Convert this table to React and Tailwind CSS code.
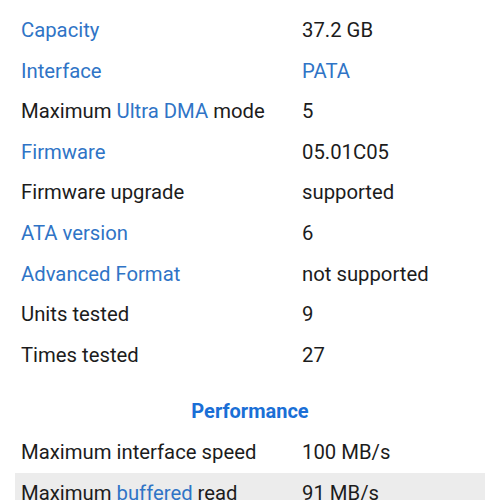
const rows = [
  { label: [{ t: 'Capacity', link: true }], value: '37.2 GB' },
  { label: [{ t: 'Interface', link: true }], value: 'PATA', valueLink: true },
  { label: [{ t: 'Maximum ' }, { t: 'Ultra DMA', link: true }, { t: ' mode' }], value: '5' },
  { label: [{ t: 'Firmware', link: true }], value: '05.01C05' },
  { label: [{ t: 'Firmware upgrade' }], value: 'supported' },
  { label: [{ t: 'ATA version', link: true }], value: '6' },
  { label: [{ t: 'Advanced Format', link: true }], value: 'not supported' },
  { label: [{ t: 'Units tested' }], value: '9' },
  { label: [{ t: 'Times tested' }], value: '27' },
]

const perf = [
  { label: [{ t: 'Maximum interface speed' }], value: '100 MB/s' },
  { label: [{ t: 'Maximum ' }, { t: 'buffered', link: true }, { t: ' read' }], value: '91 MB/s', shaded: true },
]

function Row({ row }) {
  return (
    <div className={`flex items-center h-[40.6px] px-[6px] ${row.shaded ? 'bg-[#ececec]' : ''}`}>
      <div className="w-[281px] whitespace-nowrap">
        {row.label.map((p, i) => (
          <span key={i} className={p.link ? 'text-[#2f74c6]' : ''}>{p.t}</span>
        ))}
      </div>
      <div className={row.valueLink ? 'text-[#2f74c6]' : ''}>{row.value}</div>
    </div>
  )
}

export default function App() {
  return (
    <div className="w-[500px] h-[500px] overflow-hidden bg-white text-[#1c1c1c] text-[20.3px] font-['Roboto',sans-serif]">
      <div className="pt-[10px] px-[15px]">
        {rows.map((r, i) => <Row key={i} row={r} />)}
        <div className="h-[57px] flex items-end justify-center pb-[6px]">
          <span className="font-bold text-[#1a6fd6] text-[20px]">Performance</span>
        </div>
        {perf.map((r, i) => <Row key={i} row={r} />)}
      </div>
    </div>
  )
}
